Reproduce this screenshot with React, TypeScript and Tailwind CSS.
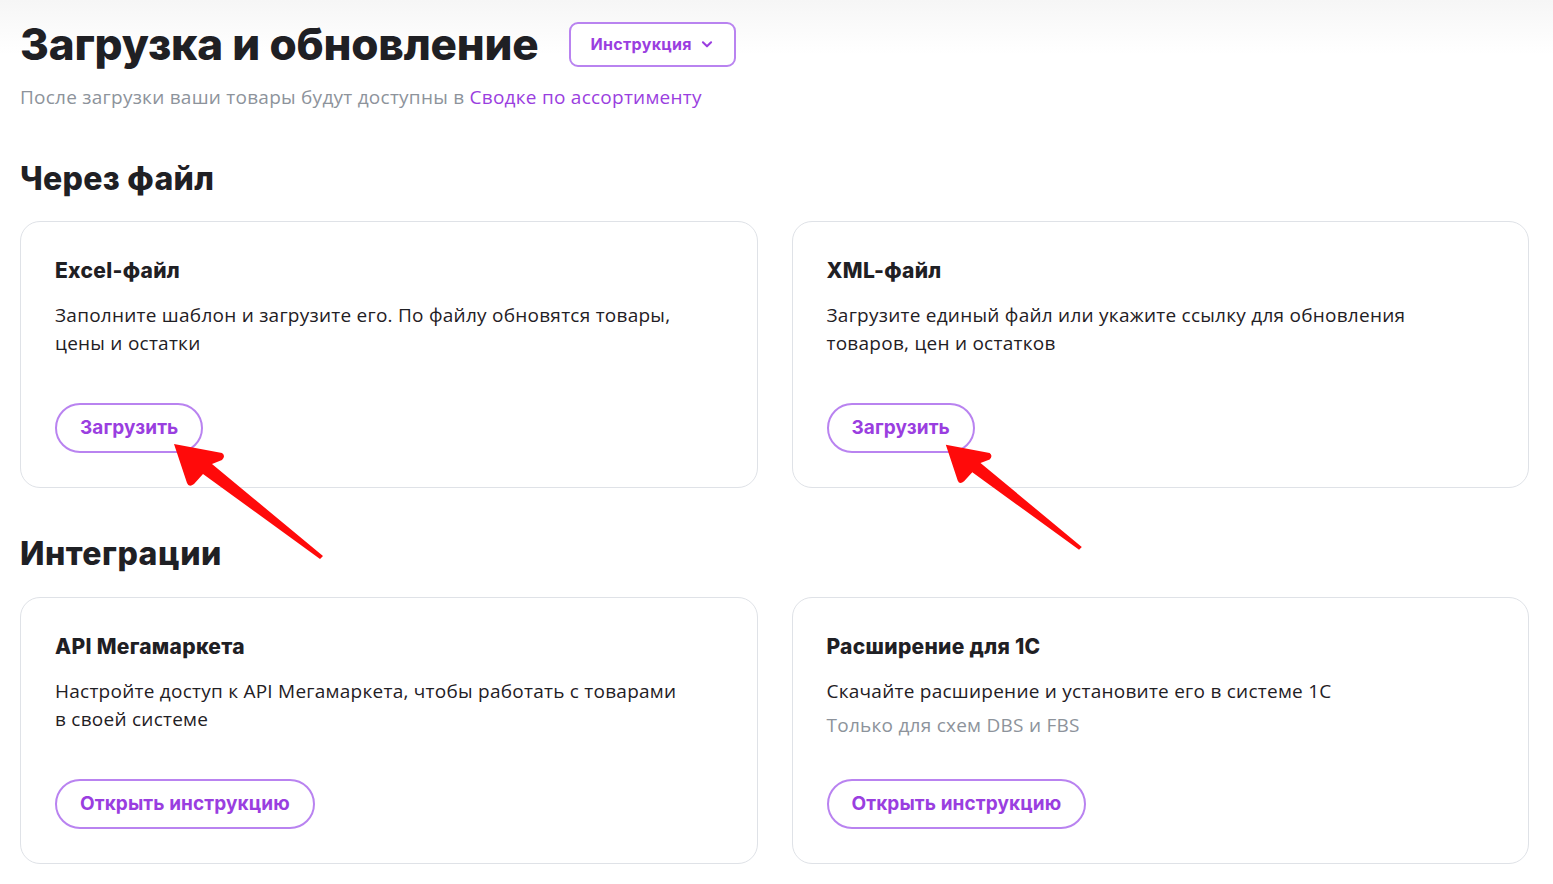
import React from 'react';

const head = "font-['Inter','Noto_Sans',sans-serif]";
const body = "font-['Open_Sans','Noto_Sans',sans-serif]";

const Arrow: React.FC<{ className: string }> = ({ className }) => (
  <svg className={className} width="160" height="125" viewBox="0 0 160 125" fill="none">
    {/* tip at (2,2), tail at (150,116) */}
    <path d="M2 2 L50 11 Q54 14 50 18 L40 22 L151 114 L148 117 L31 32 L22 42 Q17 46 15 41 Z" fill="#ff0a0a" />
  </svg>
);

const Card: React.FC<{
  title: string;
  desc: React.ReactNode;
  note?: string;
  action: string;
  arrow?: string;
}> = ({ title, desc, note, action, arrow }) => (
  <div className="relative flex h-[267px] flex-col rounded-[20px] border border-[#dfe2e7] bg-white px-[34px] pt-[35px]">
    <h3 className={`${head} text-[21px] font-extrabold leading-[28px] tracking-[0.3px] text-[#1f2024]`}>{title}</h3>
    <p className={`${body} mt-[16px] text-[19px] leading-[28px] tracking-[0.25px] text-[#1f2024]`}>{desc}</p>
    {note && <p className={`${body} mt-[6px] text-[19px] leading-[28px] tracking-[0.25px] text-[#8d939b]`}>{note}</p>}
    <div className="mt-auto mb-[34px]">
      <button className={`${head} h-[50px] rounded-full border-2 border-[#b983f0] px-[23px] text-[19px] font-bold tracking-[0.1px] text-[#9a3ee0]`}>
        {action}
      </button>
    </div>
    {arrow && <Arrow className={arrow} />}
  </div>
);

export default function App() {
  return (
    <div className="min-h-[884px] w-full bg-[linear-gradient(to_bottom,#f6f6f6,#ffffff_55px)] px-[20px] pt-[17px] pb-[20px]">
      <div className="flex items-center gap-[30px]">
        <h1 className={`${head} text-[44px] font-extrabold leading-[54px] tracking-[-0.2px] text-[#1f2024]`}>Загрузка и обновление</h1>
        <button className={`${head} flex h-[45px] items-center gap-[8px] rounded-[9px] border-2 border-[#b983f0] bg-white px-[20px] text-[16px] font-bold tracking-[0.3px] text-[#9a3ee0]`}>
          Инструкция
          <svg width="14" height="14" viewBox="0 0 24 24" fill="none" stroke="currentColor" strokeWidth="3.5" strokeLinecap="round" strokeLinejoin="round">
            <path d="M5 9l7 7 7-7" />
          </svg>
        </button>
      </div>
      <p className={`${body} mt-[13px] text-[19px] leading-[26px] tracking-[0.25px] text-[#8d939b]`}>
        После загрузки ваши товары будут доступны в <span className="text-[#9a3ee0]">Сводке по ассортименту</span>
      </p>

      <h2 className={`${head} mt-[48px] text-[32px] font-extrabold leading-[42px] tracking-[0.3px] text-[#1f2024]`}>Через файл</h2>
      <div className="mt-[21px] grid w-[1509px] grid-cols-2 gap-[34px]">
        <Card
          title="Excel-файл"
          desc={<>Заполните шаблон и загрузите его. По файлу обновятся товары,<br />цены и остатки</>}
          action="Загрузить"
          arrow="pointer-events-none absolute left-[151px] top-[220px]"
        />
        <Card
          title="XML-файл"
          desc={<>Загрузите единый файл или укажите ссылку для обновления<br />товаров, цен и остатков</>}
          action="Загрузить"
          arrow="pointer-events-none absolute left-[151px] top-[220px] w-[146px] h-[116px]"
        />
      </div>

      <h2 className={`${head} mt-[45px] text-[32px] font-extrabold leading-[42px] tracking-[0.5px] text-[#1f2024]`}>Интеграции</h2>
      <div className="mt-[22px] grid w-[1509px] grid-cols-2 gap-[34px]">
        <Card
          title="API Мегамаркета"
          desc={<>Настройте доступ к API Мегамаркета, чтобы работать с товарами<br />в своей системе</>}
          action="Открыть инструкцию"
        />
        <Card
          title="Расширение для 1С"
          desc="Скачайте расширение и установите его в системе 1С"
          note="Только для схем DBS и FBS"
          action="Открыть инструкцию"
        />
      </div>
    </div>
  );
}
